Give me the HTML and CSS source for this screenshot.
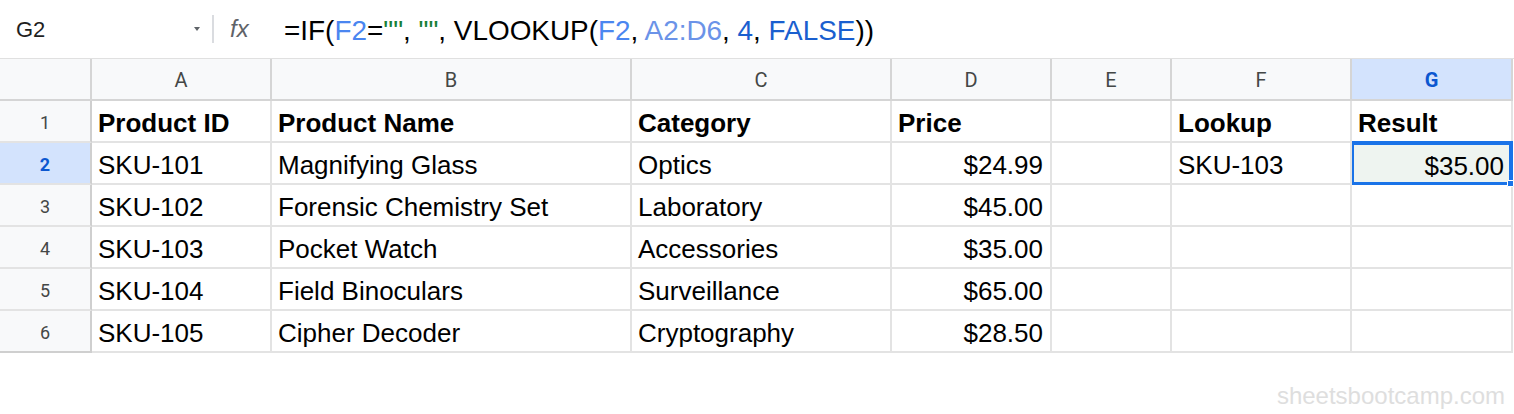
FILE: index.html
```html
<!DOCTYPE html>
<html>
<head>
<meta charset="utf-8">
<link rel="stylesheet" href="styles.css">
</head>
<body>
<div class="fbar">
  <div class="namebox"><span class="ref">G2</span><span class="caret"></span></div>
  <div class="sep"></div>
  <div class="fx">fx</div>
  <div class="formula">=IF(<span class="c1">F2</span>=<span class="str">""</span>, <span class="str">""</span>, VLOOKUP(<span class="c1">F2</span>, <span class="c2">A2:D6</span>, <span class="c3">4</span>, <span class="c3">FALSE</span>))</div>
</div>
<div class="grid">
  <div class="ch corner"></div>
  <div class="ch">A</div><div class="ch">B</div><div class="ch">C</div><div class="ch">D</div><div class="ch">E</div><div class="ch">F</div><div class="ch selh">G</div>

  <div class="rh">1</div>
  <div class="c b">Product ID</div><div class="c b">Product Name</div><div class="c b">Category</div><div class="c b">Price</div><div class="c"></div><div class="c b">Lookup</div><div class="c b">Result</div>

  <div class="rh selh">2</div>
  <div class="c">SKU-101</div><div class="c">Magnifying Glass</div><div class="c">Optics</div><div class="c r">$24.99</div><div class="c"></div><div class="c">SKU-103</div><div class="c r sel">$35.00</div>

  <div class="rh">3</div>
  <div class="c">SKU-102</div><div class="c">Forensic Chemistry Set</div><div class="c">Laboratory</div><div class="c r">$45.00</div><div class="c"></div><div class="c"></div><div class="c"></div>

  <div class="rh">4</div>
  <div class="c">SKU-103</div><div class="c">Pocket Watch</div><div class="c">Accessories</div><div class="c r">$35.00</div><div class="c"></div><div class="c"></div><div class="c"></div>

  <div class="rh">5</div>
  <div class="c">SKU-104</div><div class="c">Field Binoculars</div><div class="c">Surveillance</div><div class="c r">$65.00</div><div class="c"></div><div class="c"></div><div class="c"></div>

  <div class="rh">6</div>
  <div class="c">SKU-105</div><div class="c">Cipher Decoder</div><div class="c">Cryptography</div><div class="c r">$28.50</div><div class="c"></div><div class="c"></div><div class="c"></div>
</div>
<div class="wm">sheetsbootcamp.com</div>
</body>
</html>
```
FILE: styles.css
```css
html, body {
  margin: 0;
  padding: 0;
  background: #ffffff;
}
body {
  width: 1514px;
  height: 414px;
  overflow: hidden;
  font-family: "Liberation Sans", Arial, sans-serif;
  color: #000;
}
.fbar {
  height: 59px;
  display: flex;
  align-items: center;
  border-bottom: 1px solid #e0e0e0;
  box-sizing: border-box;
  padding-top: 2px;
}
.namebox {
  width: 212px;
  box-sizing: border-box;
  padding-left: 16px;
  padding-right: 12px;
  display: flex;
  align-items: center;
  justify-content: space-between;
}
.ref {
  font-size: 22px;
  color: #1f1f1f;
}
.caret {
  width: 0;
  height: 0;
  border-left: 3px solid transparent;
  border-right: 3px solid transparent;
  border-top: 4px solid #5f6368;
  margin-top: -2px;
}
.sep {
  width: 2px;
  height: 28px;
  background: #dadce0;
  margin-top: -2px;
}
.fx {
  width: 70px;
  box-sizing: border-box;
  padding-left: 16px;
  font-style: italic;
  font-size: 24px;
  color: #5f6368;
  margin-top: -3px;
}
.formula {
  font-size: 27.9px;
  color: #000;
  padding-top: 2px;
}
.c1 { color: #4a86f0; }
.c2 { color: #6b93e8; }
.c3 { color: #1a5fcf; }
.str { color: #188038; }

.grid {
  display: grid;
  grid-template-columns: 92px 180px 360px 260px 160px 120px 180px 161px;
  grid-auto-rows: 42px;
  width: 1513px;
}
.ch, .rh {
  background: #f8f9fa;
  color: #444746;
  display: flex;
  align-items: center;
  justify-content: center;
  box-sizing: border-box;
  border-right: 2px solid #d5d5d5;
  border-bottom: 2px solid #d5d5d5;
  font-family: Roboto, "Liberation Sans", Arial, sans-serif;
}
.ch {
  font-size: 20px;
  height: 42px;
  padding-top: 1px;
}
.rh {
  font-size: 18px;
  border-bottom: 2px solid #e3e3e3;
  border-right: 2px solid #cfcfcf;
  padding-top: 2px;
}
.grid > .rh:nth-last-child(8) {
  border-bottom-color: #cfcfcf;
}
.ch.selh, .rh.selh {
  background: #d3e3fd;
  color: #0b57d0;
  font-weight: bold;
}
.c {
  box-sizing: border-box;
  border-right: 2px solid #e3e3e3;
  border-bottom: 2px solid #e3e3e3;
  display: flex;
  align-items: center;
  padding: 4px 7px 0 6px;
  font-size: 26px;
  white-space: nowrap;
}
.b { font-weight: bold; }
.r { justify-content: flex-end; }
.sel {
  position: relative;
  background: #eef4f0;
  box-shadow: inset 0 0 0 2px #1a73e8;
  border-color: #1a73e8;
  margin-top: -2px;
  height: 44px;
  border-top: 2px solid #1a73e8;
  border-bottom: 1px solid #1a73e8;
  padding-top: 5px;
}
.sel::after {
  content: "";
  position: absolute;
  right: -3px;
  bottom: -3px;
  width: 5px;
  height: 5px;
  background: #1a73e8;
  border: 1px solid #ffffff;
  border-radius: 1px;
}
.wm {
  text-align: right;
  padding-right: 9px;
  padding-top: 29px;
  font-size: 24px;
  color: #dedede;
}
```
